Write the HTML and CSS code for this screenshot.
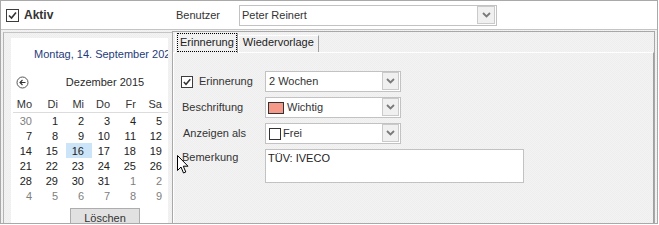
FILE: index.html
```html
<!DOCTYPE html>
<html>
<head>
<meta charset="utf-8">
<link rel="stylesheet" href="styles.css">
</head>
<body>
<div class="window">
  <div class="topbar">
    <div class="aktiv">
      <span class="check check-lg"><svg width="11" height="11" viewBox="0 0 11 11"><path d="M2 5.5 L4.5 8 L9 2.5" fill="none" stroke="#333" stroke-width="1.6"/></svg></span>
      <span class="aktiv-label">Aktiv</span>
    </div>
    <span class="user-label">Benutzer</span>
    <div class="combo combo-user">
      <span class="combo-text">Peter Reinert</span>
      <span class="dd"><svg width="9" height="6" viewBox="0 0 9 6"><path d="M1 1 L4.5 4.5 L8 1" fill="none" stroke="#7a7a7a" stroke-width="1.8"/></svg></span>
    </div>
  </div>
  <div class="main">
    <div class="calpanel">
      <div class="cal">
        <div class="cal-title">Montag, 14. September 2020</div>
        <div class="cal-nav">
          <svg class="nav-prev" width="13" height="13" viewBox="0 0 13 13"><circle cx="6.5" cy="6.5" r="5.5" fill="none" stroke="#555" stroke-width="1"/><path d="M9.5 6.5 H4 M6.5 4 L4 6.5 L6.5 9" fill="none" stroke="#333" stroke-width="1.1"/></svg>
          <span class="month">Dezember 2015</span>
          <span></span>
        </div>
        <div class="cal-head">
          <span>Mo</span><span>Di</span><span>Mi</span><span>Do</span><span>Fr</span><span>Sa</span><span>So</span>
        </div>
        <div class="cal-days">
          <span class="other">30</span><span>1</span><span>2</span><span>3</span><span>4</span><span>5</span><span>6</span>
          <span>7</span><span>8</span><span>9</span><span>10</span><span>11</span><span>12</span><span>13</span>
          <span>14</span><span>15</span><span class="sel">16</span><span>17</span><span>18</span><span>19</span><span>20</span>
          <span>21</span><span>22</span><span>23</span><span>24</span><span>25</span><span>26</span><span>27</span>
          <span>28</span><span>29</span><span>30</span><span>31</span><span class="other">1</span><span class="other">2</span><span class="other">3</span>
          <span class="other">4</span><span class="other">5</span><span class="other">6</span><span class="other">7</span><span class="other">8</span><span class="other">9</span><span class="other">10</span>
        </div>
        <div class="cal-foot"><button class="btn">Löschen</button></div>
      </div>
    </div>
    <div class="tabs">
      <div class="tabstrip">
        <div class="tab tab-active"><span class="focus">Erinnerung</span></div>
        <div class="tab tab-idle">Wiedervorlage</div>
      </div>
      <div class="tabpage">
        <div class="form">
          <div class="lbl lbl-check">
            <span class="check"><svg width="10" height="10" viewBox="0 0 10 10"><path d="M1.8 5 L4 7.3 L8.3 2.3" fill="none" stroke="#333" stroke-width="1.5"/></svg></span>
            <span>Erinnerung</span>
          </div>
          <div class="combo combo-form">
            <span class="combo-text">2 Wochen</span>
            <span class="dd"><svg width="9" height="6" viewBox="0 0 9 6"><path d="M1 1 L4.5 4.5 L8 1" fill="none" stroke="#7a7a7a" stroke-width="1.8"/></svg></span>
          </div>

          <div class="lbl lbl-pad1">Beschriftung</div>
          <div class="combo combo-form">
            <span class="swatch swatch-red"></span>
            <span class="combo-text tight">Wichtig</span>
            <span class="dd"><svg width="9" height="6" viewBox="0 0 9 6"><path d="M1 1 L4.5 4.5 L8 1" fill="none" stroke="#7a7a7a" stroke-width="1.8"/></svg></span>
          </div>

          <div class="lbl lbl-pad2">Anzeigen als</div>
          <div class="combo combo-form">
            <span class="swatch swatch-white"></span>
            <span class="combo-text tighter">Frei</span>
            <span class="dd"><svg width="9" height="6" viewBox="0 0 9 6"><path d="M1 1 L4.5 4.5 L8 1" fill="none" stroke="#7a7a7a" stroke-width="1.8"/></svg></span>
          </div>

          <div class="lbl lbl-pad1 lbl-top">Bemerkung</div>
          <div class="memo">TÜV: IVECO</div>
        </div>
      </div>
    </div>
  </div>
  <svg class="cursor" width="13" height="20" viewBox="0 0 13 20"><path d="M0.5 0.5 L0.5 15.5 L4 12 L6.5 18 L8.8 17 L6.3 11.2 L11 11.2 Z" fill="#fff" stroke="#000" stroke-width="1"/></svg>
</div>
</body>
</html>
```

FILE: styles.css
```css
* { box-sizing: border-box; }
html, body { margin: 0; padding: 0; background: #fff; }
body {
  font-family: "Liberation Sans", Arial, sans-serif;
  font-size: 11px;
  color: #333;
}
.window {
  position: relative;
  width: 658px;
  height: 224px;
  border: 1px solid #a9a9a9;
  display: flex;
  flex-direction: column;
  overflow: hidden;
}
.topbar {
  height: 29px;
  flex: none;
  background: #fff;
  border-bottom: 1px solid #c4c4c4;
  display: flex;
  align-items: center;
  padding-left: 5px;
}
.aktiv {
  width: 170px;
  display: flex;
  align-items: center;
}
.check {
  width: 12px;
  height: 12px;
  border: 1px solid #3c3c3c;
  background: #fff;
  display: inline-flex;
  align-items: center;
  justify-content: center;
  flex: none;
}
.check-lg { width: 13px; height: 13px; }
.aktiv-label {
  margin-left: 5px;
  font-weight: bold;
  font-size: 12px;
  color: #333;
}
.user-label { width: 63px; }
.combo {
  display: flex;
  align-items: center;
  background: #fff;
  border: 1px solid #c2c2c2;
  height: 21px;
}
.combo-user { width: 258px; }
.combo-user .combo-text { padding-left: 2px; }
.combo-text { padding-left: 3px; white-space: nowrap; line-height: 13px; }
.combo-text.tight { padding-left: 3px; }
.combo-text.tighter { padding-left: 2px; }
.dd {
  margin-left: auto;
  margin-right: 1px;
  align-self: flex-start;
  width: 18px;
  height: 18px;
  background: #f0f0f0;
  border: 1px solid #cacaca;
  display: flex;
  align-items: center;
  justify-content: center;
}
.combo-form .dd { width: 17px; }
.main {
  flex: 1;
  display: flex;
  padding: 0 2px 2px 2px;
  background: repeating-conic-gradient(#eeeeee 0 25%, #f3f3f3 0 50%) 0 0 / 2px 2px;
}
.calpanel {
  width: 169px;
  flex: none;
  margin-top: 2px;
  margin-bottom: -2px;
  border-left: 1px solid #b4b4b4;
  border-top: 1px solid #c4c4c4;
  padding: 5px 4px 0 7px;
  display: flex;
}
.cal {
  width: 157px;
  background: #fff;
  overflow: hidden;
  padding-top: 10px;
}
.cal-title {
  width: 157px;
  padding-left: 23px;
  line-height: 13px;
  color: #1f3b7a;
  white-space: nowrap;
  overflow: hidden;
}
.cal-nav {
  width: 182px;
  margin: 15px 0 0 3px;
  display: grid;
  grid-template-columns: 1fr auto 1fr;
  align-items: center;
  height: 13px;
  line-height: 13px;
}
.nav-prev { margin-left: 2px; }
.month { color: #2a2a2a; }
.cal-head {
  width: 186px;
  margin: 8px 0 0 2px;
  padding-left: 1px;
  display: grid;
  grid-template-columns: repeat(7, 26px);
  border-bottom: 1px solid #dcdcdc;
}
.cal-head span, .cal-days span {
  height: 15px;
  line-height: 15px;
  text-align: right;
  padding-right: 8px;
  white-space: nowrap;
}
.cal-days {
  width: 182px;
  margin-left: 3px;
  display: grid;
  grid-template-columns: repeat(7, 26px);
}
.cal-days span { line-height: 17px; color: #222; }
.cal-days span.other { color: #808080; }
.cal-days span.sel { background: #cce4f7; }
.cal-foot {
  width: 182px;
  margin: 5px 0 0 3px;
  text-align: center;
}
.btn {
  width: 70px;
  height: 19px;
  margin: 0;
  padding: 1px 0 0 0;
  font-family: "Liberation Sans", Arial, sans-serif;
  font-size: 11px;
  color: #333;
  background: #e1e1e1;
  border: 1px solid #adadad;
  line-height: 13px;
}
.tabs {
  flex: 1;
  margin-top: 1px;
  border: 1px solid #a8a8a8;
  display: flex;
  flex-direction: column;
}
.tabstrip {
  height: 20px;
  flex: none;
  display: flex;
  align-items: flex-end;
  padding-left: 2px;
}
.tab { line-height: 13px; white-space: nowrap; color: #222; }
.tab-active {
  position: relative;
  z-index: 1;
  height: 20px;
  margin-bottom: -1px;
  border-left: 1px solid #fff;
  border-right: 1px solid #a0a0a0;
  background: repeating-conic-gradient(#eeeeee 0 25%, #f3f3f3 0 50%) 0 0 / 2px 2px;
  padding-left: 1px;
  display: flex;
}
.focus {
  display: block;
  height: 19px;
  border: 1px dotted #000;
  padding: 2px 2px 0 2px;
}
.tab-idle {
  height: 17px;
  border-left: 1px solid #fff;
  border-top: 1px solid #fff;
  border-right: 1px solid #a0a0a0;
  padding: 0 4px;
}
.tabpage {
  flex: 1;
  border-top: 1px solid #fff;
  border-left: 1px solid #fff;
  border-right: 1px solid #a0a0a0;
  border-bottom: 1px solid #a0a0a0;
  padding: 18px 0 0 7px;
}
.form {
  display: grid;
  grid-template-columns: 84px auto;
  justify-content: start;
  row-gap: 5px;
  align-items: center;
}
.lbl { line-height: 13px; white-space: nowrap; }
.lbl-check { display: flex; align-items: center; gap: 6px; }
.lbl-pad1 { padding-left: 1px; }
.lbl-pad2 { padding-left: 2px; }
.lbl-top { align-self: start; padding-top: 2px; }
.combo-form { width: 136px; }
.swatch {
  flex: none;
  height: 12px;
  border: 1px solid #333;
}
.swatch-red { width: 16px; margin-left: 2px; background: #f59a88; }
.swatch-white { width: 12px; margin-left: 3px; background: #fff; }
.memo {
  width: 259px;
  height: 34px;
  background: #fff;
  border: 1px solid #c2c2c2;
  padding: 2px 2px;
  line-height: 13px;
  color: #222;
}
.cursor {
  position: absolute;
  left: 176px;
  top: 154px;
}
```
